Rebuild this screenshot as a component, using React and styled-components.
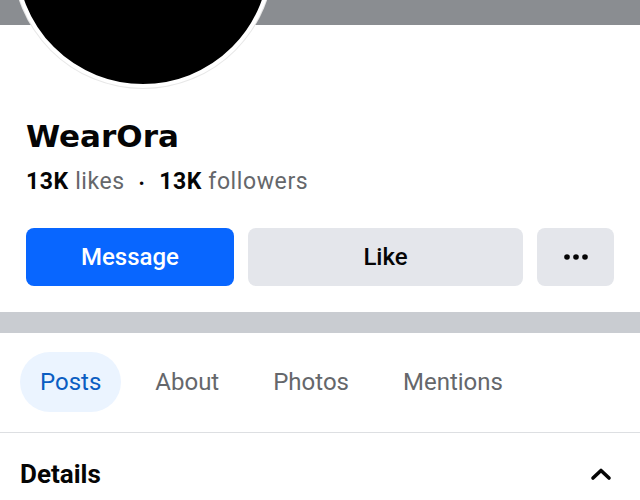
import styled, { createGlobalStyle } from "styled-components";

const GlobalStyle = createGlobalStyle`
    body {
        margin: 0;
        background: #ffffff;
        font-family: Roboto, "Liberation Sans", sans-serif;
        color: #050505;
    }
`;

const ProfilePage = () => {
    const tabs = ["Posts", "About", "Photos", "Mentions"];

    return (
        <Page>
            <GlobalStyle />
            <Cover>
                <Avatar />
            </Cover>
            <Header>
                <Name>WearOra</Name>
                <Stats>
                    <b>13K</b> likes
                    <Dot>•</Dot>
                    <b>13K</b> followers
                </Stats>
                <Actions>
                    <ActionButton $primary>Message</ActionButton>
                    <ActionButton>Like</ActionButton>
                    <MoreButton aria-label="More">
                        <svg width="26" height="8" viewBox="0 0 26 8">
                            <circle cx="4" cy="4" r="2.8" fill="#050505" />
                            <circle cx="13" cy="4" r="2.8" fill="#050505" />
                            <circle cx="22" cy="4" r="2.8" fill="#050505" />
                        </svg>
                    </MoreButton>
                </Actions>
            </Header>
            <Separator />
            <Tabs>
                {tabs.map((t, i) => (
                    <Tab key={t} $active={i === 0}>
                        {t}
                    </Tab>
                ))}
            </Tabs>
            <SectionHead>
                <SectionTitle>Details</SectionTitle>
                <svg width="22" height="14" viewBox="0 0 22 14">
                    <path
                        d="M3 11 L11 3.5 L19 11"
                        fill="none"
                        stroke="#050505"
                        strokeWidth="3.6"
                        strokeLinecap="round"
                        strokeLinejoin="round"
                    />
                </svg>
            </SectionHead>
        </Page>
    );
};

export default ProfilePage;

const Page = styled.div`
    width: 640px;
    height: 500px;
    overflow: hidden;
    background: #ffffff;
`;

const Cover = styled.div`
    position: relative;
    height: 25px;
    background: #8a8d91;
`;

const Avatar = styled.div`
    position: absolute;
    left: 13px;
    top: -172px;
    width: 252px;
    height: 252px;
    border-radius: 50%;
    background: #000000;
    border: 4px solid #ffffff;
    box-shadow: 0 0 0 1px #e8e8e8;
`;

const Header = styled.div`
    padding: 93px 26px 26px 26px;
`;

const Name = styled.h1`
    margin: 0;
    font-family: "DejaVu Sans", Roboto, sans-serif;
    font-size: 31px;
    line-height: 37px;
    font-weight: 700;
    color: #050505;
`;

const Stats = styled.div`
    margin-top: 14px;
    font-size: 23px;
    line-height: 25px;
    letter-spacing: 0.6px;
    color: #65676b;

    b {
        color: #050505;
        font-weight: 700;
    }
`;

const Dot = styled.span`
    margin: 0 14px;
    color: #050505;
    font-size: 17px;
`;

const Actions = styled.div`
    display: flex;
    gap: 14px;
    margin-top: 32px;
`;

const ActionButton = styled.button`
    flex: ${(p) => (p.$primary ? "0 0 208px" : "1")};
    height: 58px;
    border: none;
    border-radius: 8px;
    background: ${(p) => (p.$primary ? "#0866ff" : "#e4e6eb")};
    color: ${(p) => (p.$primary ? "#ffffff" : "#050505")};
    font-family: inherit;
    font-size: 24px;
    font-weight: 500;
`;

const MoreButton = styled.button`
    flex: 0 0 77px;
    height: 58px;
    border: none;
    border-radius: 8px;
    background: #e4e6eb;
    display: flex;
    align-items: center;
    justify-content: center;
    padding: 0;
`;

const Separator = styled.div`
    height: 21px;
    background: #c9ccd1;
`;

const Tabs = styled.div`
    display: flex;
    align-items: center;
    gap: 14px;
    padding: 19px 20px 20px;
    border-bottom: 1px solid #dddfe2;
`;

const Tab = styled.div`
    height: 60px;
    display: flex;
    align-items: center;
    padding: 0 20px;
    border-radius: 30px;
    font-size: 24px;
    background: ${(p) => (p.$active ? "#ebf4ff" : "transparent")};
    color: ${(p) => (p.$active ? "#0a5dc2" : "#65676b")};
`;

const SectionHead = styled.div`
    display: flex;
    align-items: center;
    justify-content: space-between;
    padding: 26px 28px 0 20px;
`;

const SectionTitle = styled.h2`
    margin: 0;
    font-size: 26px;
    line-height: 30px;
    font-weight: 700;
    color: #050505;
`;
